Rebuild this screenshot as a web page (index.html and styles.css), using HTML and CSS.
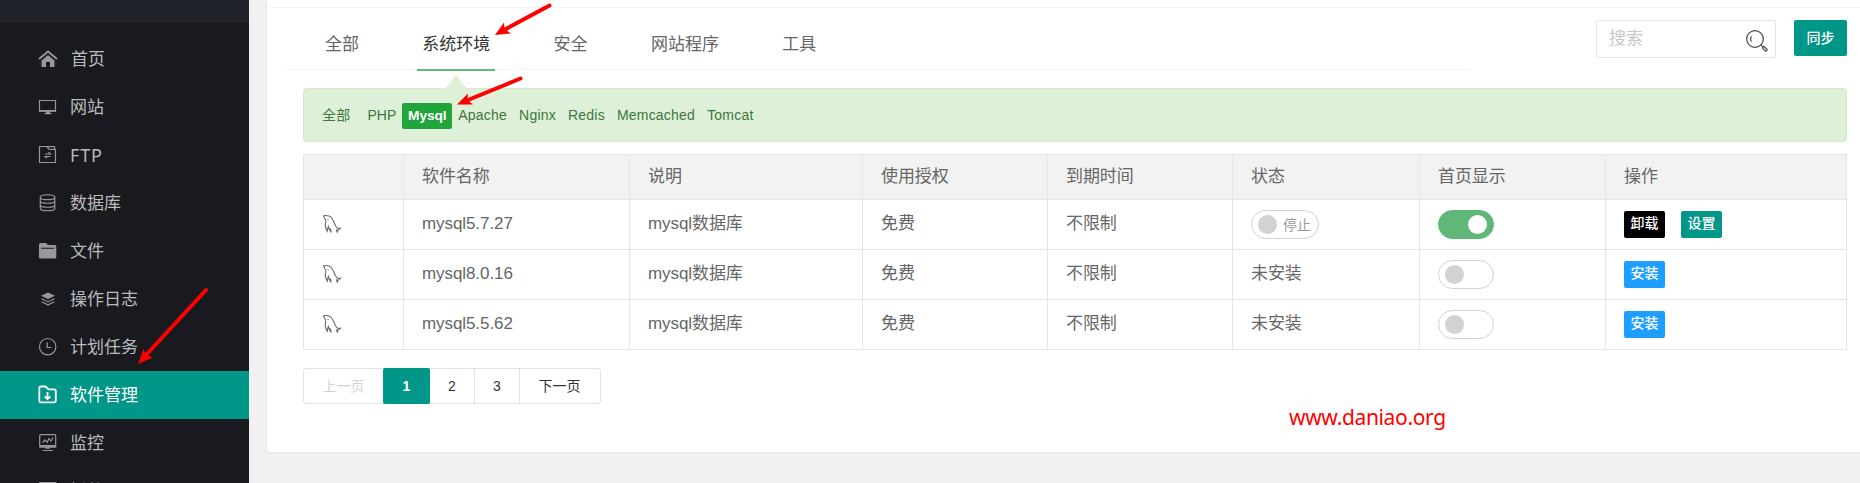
FILE: index.html
```html
<!DOCTYPE html>
<html lang="zh-CN">
<head>
<meta charset="utf-8">
<title>软件管理</title>
<link rel="stylesheet" href="styles.css">
</head>
<body>
<svg class="defs" width="0" height="0">
  <symbol id="dolphin" viewBox="0 0 20 20"><path d="M1.300 1.700C4 1.300 7.500 1.400 9.200 3.500C11.300 6 12.500 9 13.300 11.500L15.500 14.300L18.300 14.300L16.300 15.800L15.300 18L14.300 15.300M1.300 1.700C2.300 3.500 3.700 5.500 3.900 8C3 10 3 12.500 3.800 14L5.200 17.300L6.300 12.500C7 14.500 7.600 16.500 9.200 18.300L8.300 14.500M5.500 5.300L6.500 5.900"/></symbol>
</svg>
<div class="app">
  <aside class="side">
    <div class="logo"></div>
    <nav class="menu">
      <a class="item home"><svg class="ico" viewBox="0 0 20 20"><path class="ln2" d="M1 10L10 2.500L19 10"/><path class="fill" d="M10 6L3.500 11.500V18H8V13H12V18H16.500V11.500Z"/></svg>首页</a>
      <a class="item"><svg class="ico" viewBox="0 0 20 20"><path class="ln" d="M1.500 3.500H17.500V14H1.500Z"/><path class="fill" d="M1 13H18V14.800H12V16H13.500V17.200H6.500V16H8V14.800H1Z"/></svg>网站</a>
      <a class="item ftp"><svg class="ico" viewBox="0 0 20 20"><path class="ln" d="M1.500 1.500H8.500L11.500 4.500H17.500V17.500H1.500ZM9 1.700H16.500V4.500M7 9H12.500L10.500 7.200M12.500 11.500H7L9 13.300"/></svg>FTP</a>
      <a class="item"><svg class="ico" viewBox="0 0 20 20"><path class="ln" d="M2.300 4.200C2.300 .9 16.800 .9 16.800 4.200C16.800 7.500 2.300 7.500 2.300 4.200V15.500C2.300 18.500 16.800 18.500 16.800 15.500V4.200M2.300 8C2.300 11 16.800 11 16.800 8M2.300 12C2.300 15 16.800 15 16.800 12"/></svg>数据库</a>
      <a class="item"><svg class="ico" viewBox="0 0 20 20"><path class="fill" d="M1 3.500Q1 2 2.500 2H8L10 4H17Q18.300 4 18.300 5.500V16.300Q18.300 17.500 17 17.500H2.300Q1 17.500 1 16.300ZM3 6.800V7.800H16.300V6.800Z" fill-rule="evenodd"/></svg>文件</a>
      <a class="item"><svg class="ico" viewBox="0 0 20 20"><path class="fill" d="M10 3.500L17 6.800L10 10L3 6.800Z"/><path class="ln" d="M3.500 9.700L10 12.700L16.500 9.700M3.500 12.800L10 15.800L16.500 12.800"/></svg>操作日志</a>
      <a class="item"><svg class="ico" viewBox="0 0 20 20"><circle class="ln" cx="9.700" cy="9.700" r="8.200"/><path class="ln" d="M9.200 5.500V10.500H13.300"/></svg>计划任务</a>
      <a class="item active"><svg class="ico" viewBox="0 0 20 20"><path class="ln2" d="M3 1.500H7.500L10.500 4.300H16Q17.800 4.300 17.800 6V15.500Q17.800 17.300 16 17.300H3Q1.300 17.300 1.300 15.500V3Q1.300 1.500 3 1.500ZM9.500 7V14M6.700 11.500L9.500 14L12.300 11.500"/></svg>软件管理</a>
      <a class="item"><svg class="ico" viewBox="0 0 20 20"><path class="ln" d="M3 1.700H16.500Q17.700 1.700 17.700 3V14H1.700V3Q1.700 1.700 3 1.700ZM4.500 9.500L7 7L9 9.500L11 5.500L13 8L15 4.500M4.500 17.500H15"/><path class="fill" d="M2 12H17.500V14.500H12V15.800H7.500V14.500H2Z"/></svg>监控</a>
      <a class="item"><svg class="ico" viewBox="0 0 20 20"><path class="ln2" d="M2 1.900H17.500V17H2Z"/></svg>插件</a>
    </nav>
  </aside>
  <main class="content">
    <section class="card">
      <div class="rule"></div>
      <div class="top">
        <div class="tabs"><a>全部</a><a class="on">系统环境</a><a>安全</a><a>网站程序</a><a>工具</a></div>
        <div class="tools">
          <label class="search"><span>搜索</span><svg viewBox="0 0 24 24"><circle cx="10" cy="10" r="8.300"/><path d="M6.300 7.200Q4.800 10 6.300 12.800M16 16L17.500 17.500M17.300 18.800L18.800 17.300L22 20.200Q22.300 22 20.500 22.100Z"/></svg></label>
          <button class="sync">同步</button>
        </div>
      </div>
      <div class="filter"><a class="all">全部</a><a class="php">PHP</a><a class="sel">Mysql</a><a>Apache</a><a>Nginx</a><a>Redis</a><a>Memcached</a><a>Tomcat</a></div>
      <table>
        <colgroup><col class="c1"><col class="c2"><col class="c3"><col class="c4"><col class="c5"><col class="c6"><col class="c7"><col class="c8"></colgroup>
        <thead><tr><th></th><th>软件名称</th><th>说明</th><th>使用授权</th><th>到期时间</th><th>状态</th><th>首页显示</th><th>操作</th></tr></thead>
        <tbody>
          <tr><td><svg class="sql"><use href="#dolphin"/></svg></td><td>mysql5.7.27</td><td>mysql数据库</td><td>免费</td><td>不限制</td><td><span class="switch wide"><i></i>停止</span></td><td><span class="switch checked"><i></i></span></td><td><div class="acts"><button class="btn black">卸载</button><button class="btn teal">设置</button></div></td></tr>
          <tr><td><svg class="sql"><use href="#dolphin"/></svg></td><td>mysql8.0.16</td><td>mysql数据库</td><td>免费</td><td>不限制</td><td>未安装</td><td><span class="switch"><i></i></span></td><td><div class="acts"><button class="btn blue">安装</button></div></td></tr>
          <tr><td><svg class="sql"><use href="#dolphin"/></svg></td><td>mysql5.5.62</td><td>mysql数据库</td><td>免费</td><td>不限制</td><td>未安装</td><td><span class="switch"><i></i></span></td><td><div class="acts"><button class="btn blue">安装</button></div></td></tr>
        </tbody>
      </table>
      <div class="pager"><a class="prev">上一页</a><a class="cur">1</a><a class="num">2</a><a class="num">3</a><a class="next">下一页</a></div>
    </section>
  </main>
</div>
<span class="mark">www.daniao.org</span>
<svg class="arrows" viewBox="0 0 1860 483">
  <g><path d="M549.500 5.500L504 30"/><polygon points="495,35 504,22.500 504.500,29 511,33.500"/></g>
  <g><path d="M520.500 78.500L468 100"/><polygon points="457,104.500 468,93.500 467.500,100 473,104.500"/></g>
  <g><path d="M206 290L146 355"/><polygon points="138,364 143.500,349 146,355 153,357.500"/></g>
</svg>
</body>
</html>
```
FILE: styles.css
```css
* { box-sizing: border-box; }
body { margin: 0; height: 483px; overflow: hidden; position: relative; background: #f1f1f1; color: #666; font: 17px/24px "Liberation Sans", "Noto Sans CJK SC", sans-serif; }
button { border: 0; padding: 0; font: inherit; color: #fff; }
.defs { position: absolute; }
.app { display: flex; height: 483px; overflow: hidden; }
.side { width: 249px; flex: none; background: #191a1f; overflow: hidden; }
.logo { height: 23px; background: #20222a; }
.menu { padding-top: 12px; }
.item { display: flex; align-items: center; gap: 12px; height: 48px; padding-left: 38px; color: #babbbc; font-family: "Noto Sans", "Noto Sans CJK SC", sans-serif; }
.item.active { background: #009688; color: #fff; }
.ftp { font-size: 18px; letter-spacing: .8px; }
.ico { width: 20px; height: 20px; flex: none; color: #97989a; }
.home .ico { margin-right: 1px; }
.active .ico { color: #fff; }
.ln, .ln2 { fill: none; stroke: currentColor; stroke-width: 1.2; }
.ln2 { stroke-width: 1.8; }
.fill { fill: currentColor; }
.content { flex: 1; padding-left: 17px; }
.card { height: 453px; background: #fff; border-left: 1px solid #e8e8e8; border-bottom: 1px solid #e6e6e6; border-radius: 0 0 0 3px; }
.rule { height: 8px; border-bottom: 1px solid #f4f4f4; }
.top { display: flex; justify-content: space-between; height: 80px; padding: 0 13px 0 18px; }
.tabs { display: flex; gap: 53.3px; width: 1185px; height: 62px; border-bottom: 1px solid #f3f3f3; padding: 0 35px; }
.tabs a { height: 63px; padding: 25px 5px 0; line-height: 24px; white-space: nowrap; }
.tabs .on { color: #333; border-bottom: 2px solid #5fb878; }
.tools { display: flex; gap: 18px; padding-top: 12px; }
.search { display: flex; justify-content: space-between; width: 180px; height: 38px; border: 1px solid #e4e4e4; border-radius: 2px; padding: 6px 6px 0 12px; color: #c8c8c8; }
.search svg { width: 24px; height: 24px; margin-top: 2px; fill: none; stroke: #444; stroke-width: 1.2; }
.sync { width: 53px; height: 36px; border-radius: 2px; background: #009688; font-size: 14px; font-weight: 500; }
.filter { display: flex; position: relative; margin: 0 13px 12px 36px; height: 54px; border: 1px solid #d6e9c6; border-radius: 4px; background: #dff0d8; padding: 14px 18px; gap: 12px; font-size: 14px; line-height: 24px; color: #3c763d; letter-spacing: .22px; }
.filter::before { content: ""; position: absolute; left: 141px; top: -14px; border: 11px solid transparent; border-top: 0; border-bottom: 14px solid #dff0d8; }
.all { margin-right: 5px; }
.php { letter-spacing: 0; }
.sel { margin: 0 -6px; width: 50px; height: 26px; line-height: 26px; text-align: center; background: #1fa53a; color: #fff; border-radius: 2px; font-size: 13.7px; font-weight: 700; letter-spacing: -.1px; }
table { width: 1544px; margin-left: 36px; table-layout: fixed; border-collapse: collapse; }
th, td { border: 1px solid #e5e5e5; padding: 0 0 0 18px; text-align: left; font-weight: 400; height: 50px; letter-spacing: -.08px; }
th { height: 45px; background: #f2f2f2; }
td { padding-bottom: 2px; }
.c1 { width: 100px; } .c2 { width: 226px; } .c3 { width: 233px; } .c4 { width: 185px; } .c5 { width: 185px; } .c6 { width: 187px; } .c7 { width: 186px; } .c8 { width: 241px; }
.sql { display: block; width: 20px; height: 20px; fill: none; stroke: #666; stroke-width: 1.1; }
.switch { display: flex; align-items: center; width: 56px; height: 29px; margin-top: 2px; border: 1px solid #d2d2d2; border-radius: 15px; padding-left: 6px; font-size: 14px; color: #999; gap: 6px; }
.switch i { width: 19px; height: 19px; border-radius: 50%; background: #d2d2d2; }
.wide { width: 68px; }
.checked { background: #5fb878; border-color: #5fb878; padding-left: 29px; }
.checked i { background: #fff; }
.acts { display: flex; gap: 16px; padding-top: 2px; }
.btn { width: 41px; height: 27px; line-height: 25px; padding-bottom: 2px; border-radius: 2px; font-size: 14px; font-weight: 500; }
.black { background: #000; } .teal { background: #009688; } .blue { background: #1e9fff; }
.pager { display: flex; width: 298px; height: 36px; margin: 18px 0 0 36px; border: 1px solid #e2e2e2; border-radius: 3px; font-size: 14px; line-height: 34px; text-align: center; color: #333; }
.pager a { border-left: 1px solid #e2e2e2; }
.pager .prev { width: 79px; border: 0; color: #d2d2d2; }
.pager .cur { width: 47px; margin: -1px 0; line-height: 36px; border: 0; border-radius: 2px; background: #009688; color: #fff; font-weight: 700; }
.pager .num { width: 45px; }
.pager .cur + .num { border: 0; width: 44px; }
.pager .next { flex: 1; padding-right: 1px; }
.mark { position: absolute; left: 1289px; top: 403px; font: 21px/28px "Noto Sans", sans-serif; letter-spacing: -.35px; color: #f00; }
.arrows { position: absolute; left: 0; top: 0; width: 1860px; height: 483px; fill: red; }
.arrows path { stroke: red; stroke-width: 4; stroke-linecap: round; }
```
